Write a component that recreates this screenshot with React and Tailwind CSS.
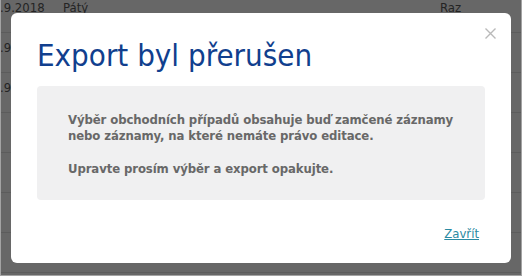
export default function App() {
  const rows = [
    { date: ".9.2018", name: "Pátý", who: "Raz" },
    { date: ".9.", name: "", who: "" },
    { date: ".9.", name: "", who: "" },
    { date: "", name: "", who: "" },
    { date: "", name: "", who: "" },
    { date: "", name: "", who: "" },
    { date: "", name: "", who: "" },
  ];

  return (
    <div
      className="relative w-[522px] h-[276px] overflow-hidden bg-[#676767] border-x border-b border-[#a3a3a3]"
      style={{ fontFamily: '"DejaVu Sans Condensed", "DejaVu Sans", sans-serif' }}
    >
      {/* table behind the overlay */}
      <div className="-mt-[7px]">
        {rows.map((r, i) => (
          <div
            key={i}
            className="flex h-[40px] pt-[7px] border-b border-[#5c5c5c] text-[13px] leading-[16px] text-[#242424]"
          >
            <div className="w-[63px] -ml-[1px]">{r.date}</div>
            <div className="w-[377px]">{r.name}</div>
            <div>{r.who}</div>
          </div>
        ))}
      </div>

      {/* modal */}
      <div className="absolute left-[10px] top-[13px] w-[500px] h-[250px] bg-white rounded-[6px] px-[26px] pt-[23px] flex flex-col">
        <button className="absolute right-[15px] top-[15px] w-[11px] h-[11px] text-[#b9b9b9]">
          <svg viewBox="0 0 11 11" className="w-[11px] h-[11px]" stroke="currentColor" strokeWidth="1.4">
            <path d="M0.5 0.5 L10.5 10.5 M10.5 0.5 L0.5 10.5" />
          </svg>
        </button>
        <h1 className="text-[31px] leading-[38px] text-[#113f8e] font-normal">Export byl přerušen</h1>
        <div className="mt-[12px] h-[114px] bg-[#f0f0f1] rounded-[4px] pl-[31px] pt-[26px] text-[13px] leading-[16px] font-bold tracking-[-0.1px] text-[#686868]">
          <p>Výběr obchodních případů obsahuje buď zamčené záznamy</p>
          <p>nebo záznamy, na které nemáte právo editace.</p>
          <p className="mt-[17px]">Upravte prosím výběr a export opakujte.</p>
        </div>
        <div className="flex justify-end pr-[6px] mt-[26px]">
          <a href="#" className="text-[13px] leading-[16px] text-[#2a8aa2] underline">Zavřít</a>
        </div>
      </div>
    </div>
  );
}
